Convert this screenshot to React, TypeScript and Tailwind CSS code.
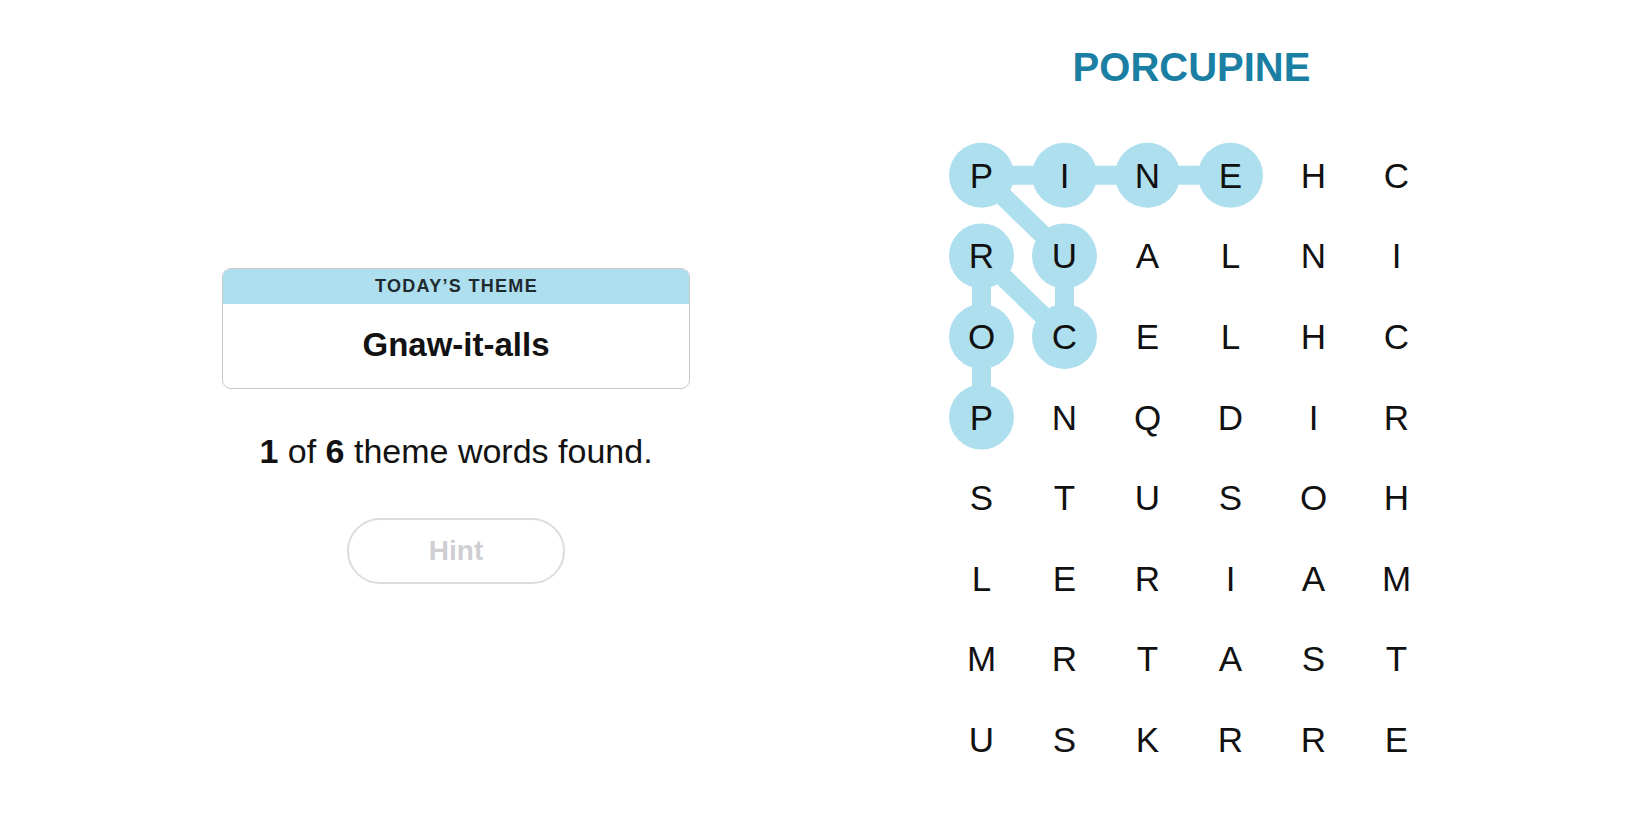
import React from "react";

const LETTERS = [
  "PINEHC",
  "RUALNI",
  "OCELHC",
  "PNQDIR",
  "STUSOH",
  "LERIAM",
  "MRTAST",
  "USKRRE",
];

const CW = 83;
const RH = 80.6;

const path: [number, number][] = [
  [3, 0],
  [2, 0],
  [1, 0],
  [2, 1],
  [1, 1],
  [0, 0],
  [0, 1],
  [0, 2],
  [0, 3],
];

const cx = (c: number) => CW / 2 + c * CW;
const cy = (r: number) => RH / 2 + r * RH;

export default function App() {
  return (
    <div
      className="w-[1650px] h-[825px] bg-white flex overflow-hidden"
      style={{ fontFamily: '"Liberation Sans", Arial, sans-serif' }}
    >
      {/* Left column */}
      <div className="ml-[222px] w-[468px] flex flex-col items-center pt-[268px]">
        <div className="w-[468px] h-[121px] rounded-[9px] border border-[#c9c9c9] overflow-hidden flex flex-col">
          <div className="h-[35px] bg-[#aedfee] flex items-center justify-center pl-[1px] text-[18px] font-semibold tracking-[1.3px] text-[#1e2a30]">
            TODAY’S THEME
          </div>
          <div className="flex-1 flex items-center justify-center pb-[2px] text-[33px] font-bold text-[#121212]">
            Gnaw-it-alls
          </div>
        </div>
        <div className="mt-[42px] h-[40px] leading-[40px] text-[34px] text-[#121212]">
          <span className="font-bold">1</span> of <span className="font-bold">6</span> theme words found.
        </div>
        <div className="mt-[47px] w-[218px] h-[66px] rounded-full border-2 border-[#dcdcdc] flex items-center justify-center text-[28px] font-bold text-[#cfcfd3]">
          Hint
        </div>
      </div>

      {/* Right column */}
      <div className="ml-[250px] w-[498px] flex flex-col">
        <div className="pt-[43px] h-[91px] pl-[5px] leading-[48px] text-center text-[40px] font-bold text-[#1a7fa3]">
          PORCUPINE
        </div>
        <div className="relative mt-[44px] w-[498px]">
          <svg
            className="absolute left-0 top-0"
            width={498}
            height={645}
            viewBox="0 0 498 645"
          >
            {path.slice(1).map((p, i) => {
              const q = path[i];
              return (
                <line
                  key={i}
                  x1={cx(q[1])}
                  y1={cy(q[0])}
                  x2={cx(p[1])}
                  y2={cy(p[0])}
                  stroke="#aedfee"
                  strokeWidth={19}
                />
              );
            })}
            {path.map((p, i) => (
              <circle key={i} cx={cx(p[1])} cy={cy(p[0])} r={32.5} fill="#aedfee" />
            ))}
          </svg>
          <div className="relative grid grid-cols-[repeat(6,83px)] grid-rows-[repeat(8,80.6px)]">
            {LETTERS.map((row, r) =>
              row.split("").map((ch, c) => (
                <div
                  key={`${r}-${c}`}
                  className="flex items-center justify-center text-[35px] leading-[35px] text-[#111111]"
                >
                  {ch}
                </div>
              ))
            )}
          </div>
        </div>
      </div>
    </div>
  );
}
